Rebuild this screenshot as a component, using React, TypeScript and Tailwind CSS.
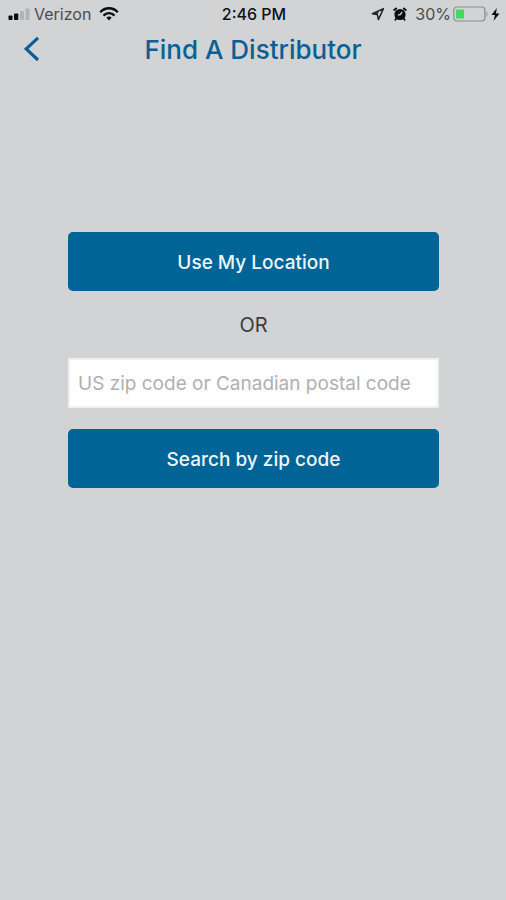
import { useState } from "react";

function StatusBar() {
  return (
    <div className="grid h-7 grid-cols-[1fr_auto_1fr] items-center pr-1.5 pl-2 text-base text-[#4b4c4e]">
      <div className="flex items-center">
        <svg width="22" height="12" viewBox="0 0 22 12" aria-hidden="true">
          <rect x="0.5" y="7.5" width="4" height="4.5" rx="0.8" fill="#0b0b0c" />
          <rect x="6" y="5.5" width="4.3" height="6.5" rx="0.8" fill="#0b0b0c" />
          <rect x="12" y="3" width="4" height="9" rx="0.8" fill="#b2b3b5" />
          <rect x="17.5" y="0.5" width="4" height="11.5" rx="0.8" fill="#b2b3b5" />
        </svg>
        <span className="ml-1">Verizon</span>
        <svg className="ml-2" width="20" height="14" viewBox="0 0 20 14" fill="none" stroke="#0b0b0c" strokeWidth="2.3" aria-hidden="true">
          <path d="M1.2 5.2C6-.1 14-.1 18.8 5.2" />
          <path d="M4.5 8.6C7.6 5.3 12.4 5.3 15.5 8.6" />
          <path d="M7.3 10.6Q10 8.4 12.7 10.6L10 13.5Z" fill="#0b0b0c" stroke="none" />
        </svg>
      </div>
      <span className="font-medium text-[#111213]">2:46 PM</span>
      <div className="flex items-center justify-end">
        <svg width="14" height="14" viewBox="0 0 14 14" aria-hidden="true">
          <path d="M12.4 1.6L1.4 6.8L6.4 7.6L7.4 12.6Z" fill="none" stroke="#242526" strokeWidth="1.5" strokeLinejoin="round" />
          <path d="M1 6.4L8 4.6L5.6 8.2Z" fill="#242526" />
        </svg>
        <svg className="ml-2" width="14" height="14" viewBox="0 0 14 14" aria-hidden="true">
          <circle cx="7" cy="7.5" r="5.6" fill="#0b0b0c" />
          <path d="M1.2 3L3.2 1.4M12.8 3L10.8 1.4M3.3 11.5L2.4 12.8M10.7 11.5L11.6 12.8" stroke="#0b0b0c" strokeWidth="1.9" strokeLinecap="round" />
          <path d="M9.2 5L7 7.8H4.8" fill="none" stroke="#d1d3d4" strokeWidth="1.3" />
        </svg>
        <span className="ml-2">30%</span>
        <svg className="ml-0.5" width="36" height="16" viewBox="0 0 36 16" aria-hidden="true">
          <rect x="0.8" y="1" width="31" height="14" rx="3" fill="none" stroke="#8c8d8f" strokeWidth="1.2" />
          <rect x="3" y="3.5" width="8" height="9" fill="#3edb5c" />
          <path d="M32.5 4.5Q37 8 32.5 11.5Z" fill="#a5a6a8" />
        </svg>
        <svg className="ml-0.5" width="9" height="13" viewBox="0 0 9 13" aria-hidden="true">
          <path d="M5.8 0L0.5 7H4L2.5 13L8.5 5.4H5Z" fill="#0b0b0c" />
        </svg>
      </div>
    </div>
  );
}

const primaryButton =
  "h-[59px] w-full rounded-[5px] bg-[#006496] pt-0.5 text-[19px] leading-7 font-medium text-[#edf5fa]";

export default function App() {
  const [zip, setZip] = useState("");

  return (
    <div className="min-h-screen bg-[#d1d3d4] font-['Inter',sans-serif]">
      <StatusBar />
      <header className="grid h-[42px] grid-cols-[64px_1fr_64px] items-center text-[#0c5f95]">
        <button type="button" aria-label="Back" className="flex h-full items-center pl-6">
          <svg width="16" height="26" viewBox="0 0 16 26" fill="none" stroke="currentColor" strokeWidth="3.2" aria-hidden="true">
            <path d="M14 1.8L2.2 12.8L14 24" />
          </svg>
        </button>
        <h1 className="text-center text-[26px] font-medium whitespace-nowrap">Find A Distributor</h1>
      </header>
      <main className="pt-[162px] pr-[67px] pl-[68px]">
        <button type="button" className={primaryButton}>
          Use My Location
        </button>
        <p className="pt-5 pb-[19px] text-center text-xl text-[#3c3d3f]">OR</p>
        <form onSubmit={(event) => event.preventDefault()}>
          <input
            type="text"
            aria-label="US zip code or Canadian postal code"
            placeholder="US zip code or Canadian postal code"
            value={zip}
            onChange={(event) => setZip(event.target.value)}
            className="block h-[50px] w-full border-2 border-[#eeefef] bg-white px-2 text-[19px] text-[#3c3d3f] placeholder:text-[#b0b0b1]"
          />
          <button type="submit" className={`mt-[21px] ${primaryButton}`}>
            Search by zip code
          </button>
        </form>
      </main>
    </div>
  );
}
